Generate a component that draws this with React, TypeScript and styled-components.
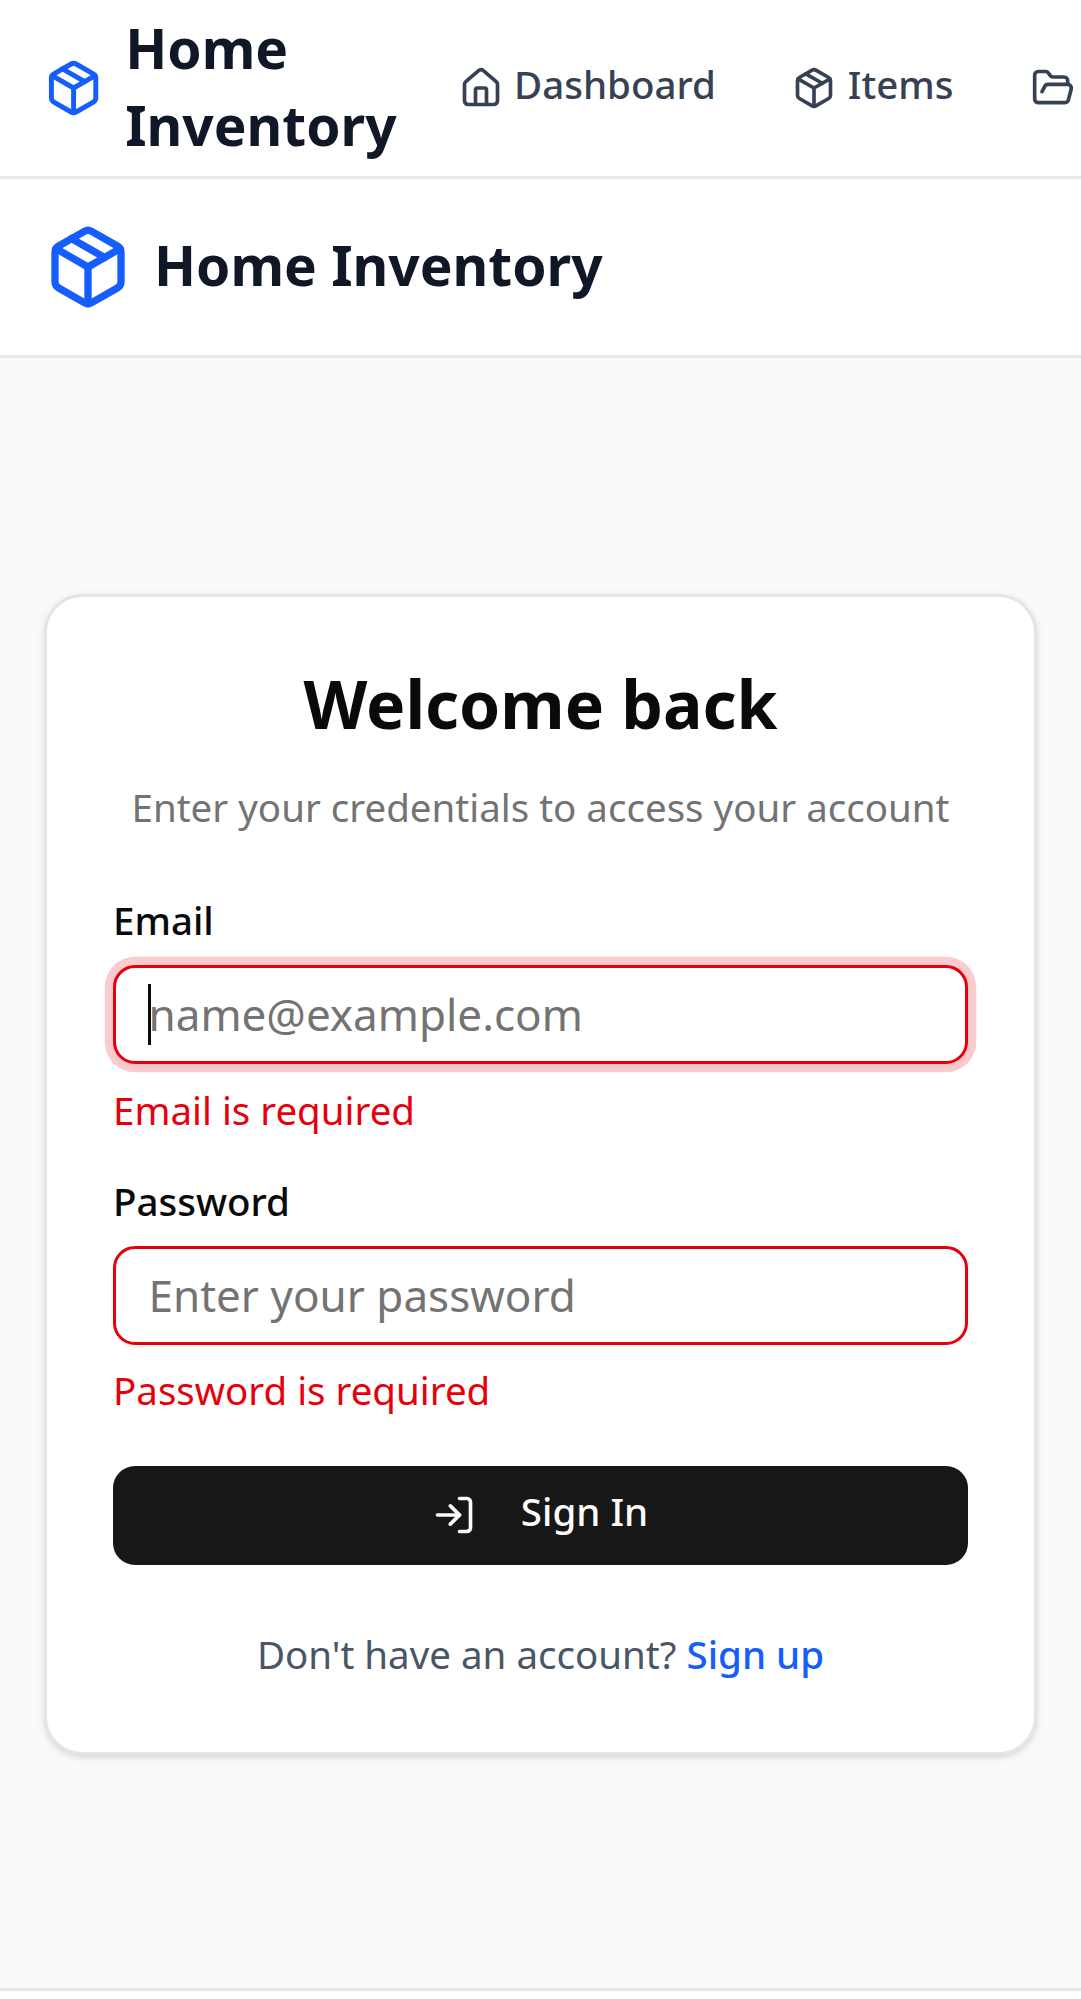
import React from "react";
import styled, { createGlobalStyle, css } from "styled-components";
import { FolderOpen, House, LogIn, Package } from "lucide-react";

const GlobalStyle = createGlobalStyle`
  html {
    font-size: 44px;
    overflow: hidden;
  }
  *, *::before, *::after {
    box-sizing: border-box;
    margin: 0;
    padding: 0;
  }
  body {
    font-family: "Noto Sans", sans-serif;
    line-height: 1.5;
    color: #0a0a0a;
    background: #ffffff;
    overflow: hidden;
  }
`;

const Page = styled.div`
  height: 1999px;
  display: flex;
  flex-direction: column;
  overflow: hidden;
`;

const NavBar = styled.nav`
  flex: none;
  display: flex;
  align-items: center;
  height: 178.75px;
  padding: 0 1rem;
  border-bottom: 3px solid #e5e7eb;
  background: #ffffff;
  overflow: hidden;
`;

const NavBrand = styled.a`
  flex: none;
  display: flex;
  align-items: center;
  gap: 22px;
  width: 382px;
  color: #101828;
`;

const NavBrandIcon = styled(Package)`
  flex: none;
  width: 59.2px;
  height: 88px;
  color: #155dfc;
`;

const BrandText = styled.span`
  font-size: 55px;
  font-weight: 700;
  line-height: 77px;
  margin-top: -4px;
`;

const NavLinks = styled.div`
  flex: none;
  display: flex;
  gap: 11px;
`;

const NavLink = styled.a<{ $gap: number; $trail: number }>`
  flex: none;
  display: flex;
  align-items: center;
  gap: ${(p) => p.$gap}px;
  padding: 0 ${(p) => p.$trail}px 0 33px;
  font-size: 38.5px;
  font-weight: 500;
  line-height: 55px;
  color: #364153;
  white-space: nowrap;

  svg {
    flex: none;
    width: 44px;
    height: 44px;
  }
`;

const RaisedLabel = styled.span`
  margin-top: -7px;
`;

const AuthHeader = styled.header`
  flex: none;
  display: flex;
  align-items: center;
  gap: 22px;
  height: 178.75px;
  padding: 0 1rem;
  border-bottom: 3px solid #e5e7eb;
  color: #101828;

  svg {
    width: 88px;
    height: 88px;
    color: #155dfc;
  }
`;

const Main = styled.main`
  flex: none;
  height: 1630.75px;
  padding: 236.5px 44px 0;
  background: #f9fafb;
`;

const Card = styled.section`
  height: 1160.5px;
  padding: 66px;
  border: 3px solid #e5e5e5;
  border-radius: 38.5px;
  background: #ffffff;
  box-shadow: 0 2.75px 8.25px rgba(0, 0, 0, 0.1), 0 2.75px 5.5px -2.75px rgba(0, 0, 0, 0.1);
`;

const Title = styled.h1`
  font-size: 66px;
  font-weight: 700;
  line-height: 81px;
  height: 88px;
  text-align: center;
`;

const Description = styled.p`
  margin-top: 31px;
  height: 55px;
  font-size: 38.5px;
  line-height: 50px;
  color: #737373;
  text-align: center;
`;

const Form = styled.form`
  display: flex;
  flex-direction: column;
  gap: 44px;
  margin-top: 67.75px;
`;

const Field = styled.div`
  display: flex;
  flex-direction: column;
  gap: 22px;
`;

const Label = styled.label`
  margin-top: -0.4px;
  height: 38.9px;
  font-size: 38.5px;
  font-weight: 500;
  line-height: 32px;
`;

const InputWrap = styled.div`
  position: relative;
  display: flex;
`;

const Input = styled.input<{ $focused?: boolean }>`
  width: 100%;
  height: 99px;
  padding: 0 32.5px 1px;
  border: 3px solid #e7000b;
  border-radius: 22px;
  outline: none;
  background: #ffffff;
  font-family: inherit;
  font-size: 44px;
  box-shadow: 0 2.75px 5.5px rgba(0, 0, 0, 0.05);
  ${(p) =>
    p.$focused &&
    css`
      box-shadow: 0 0 0 8.25px rgba(231, 0, 11, 0.2), 0 2.75px 5.5px rgba(0, 0, 0, 0.05);
    `}

  &::placeholder {
    color: #737373;
    opacity: 1;
  }
`;

const Caret = styled.span`
  position: absolute;
  left: 35.4px;
  top: 19px;
  width: 3px;
  height: 61px;
  background: #0a0a0a;
`;

const ErrorText = styled.p`
  margin-top: -0.4px;
  height: 55.4px;
  font-size: 38.5px;
  line-height: 48px;
  color: #e7000b;
`;

const SubmitButton = styled.button`
  display: flex;
  align-items: center;
  justify-content: center;
  gap: 45px;
  height: 99px;
  padding-right: 1px;
  border: 0;
  border-radius: 22px;
  background: #171717;
  color: #fafafa;
  font-family: inherit;
  font-size: 38.5px;
  font-weight: 500;
  line-height: 55px;

  svg {
    width: 44px;
    height: 44px;
  }
`;

const SignUpPrompt = styled.p`
  margin-top: 66px;
  height: 55px;
  font-size: 38.5px;
  line-height: 47px;
  color: #4a5565;
  text-align: center;

  a {
    font-weight: 500;
    color: #155dfc;
  }
`;

const Footer = styled.footer`
  flex: 1;
  border-top: 3px solid #e5e7eb;
  background: #ffffff;
`;

const links = [
  { id: "dashboard", label: "Dashboard", Icon: House, gap: 11, trail: 32 },
  { id: "items", label: "Items", Icon: Package, gap: 12, trail: 34 },
  { id: "folders", label: "", Icon: FolderOpen, gap: 11, trail: 0 },
];

type LoginFieldProps = {
  label: string;
  type: string;
  placeholder: string;
  error: string;
  focused?: boolean;
};

function LoginField({ label, type, placeholder, error, focused }: LoginFieldProps) {
  const id = label.toLowerCase();
  return (
    <Field>
      <Label htmlFor={id}>{label}</Label>
      <InputWrap>
        <Input id={id} type={type} placeholder={placeholder} $focused={focused} />
        {focused && <Caret />}
      </InputWrap>
      <ErrorText>{error}</ErrorText>
    </Field>
  );
}

export default function App() {
  return (
    <Page>
      <GlobalStyle />
      <NavBar>
        <NavBrand>
          <NavBrandIcon />
          <BrandText>
            Home
            <br />
            Inventory
          </BrandText>
        </NavBrand>
        <NavLinks>
          {links.map(({ id, label, Icon, gap, trail }) => (
            <NavLink key={id} $gap={gap} $trail={trail}>
              <Icon />
              {label && <RaisedLabel>{label}</RaisedLabel>}
            </NavLink>
          ))}
        </NavLinks>
      </NavBar>
      <AuthHeader>
        <Package />
        <BrandText>Home Inventory</BrandText>
      </AuthHeader>
      <Main>
        <Card>
          <Title>Welcome back</Title>
          <Description>Enter your credentials to access your account</Description>
          <Form>
            <LoginField
              label="Email"
              type="email"
              placeholder="name@example.com"
              error="Email is required"
              focused
            />
            <LoginField
              label="Password"
              type="password"
              placeholder="Enter your password"
              error="Password is required"
            />
            <SubmitButton type="button">
              <LogIn />
              <RaisedLabel>Sign In</RaisedLabel>
            </SubmitButton>
          </Form>
          <SignUpPrompt>
            Don't have an account? <a>Sign up</a>
          </SignUpPrompt>
        </Card>
      </Main>
      <Footer />
    </Page>
  );
}
